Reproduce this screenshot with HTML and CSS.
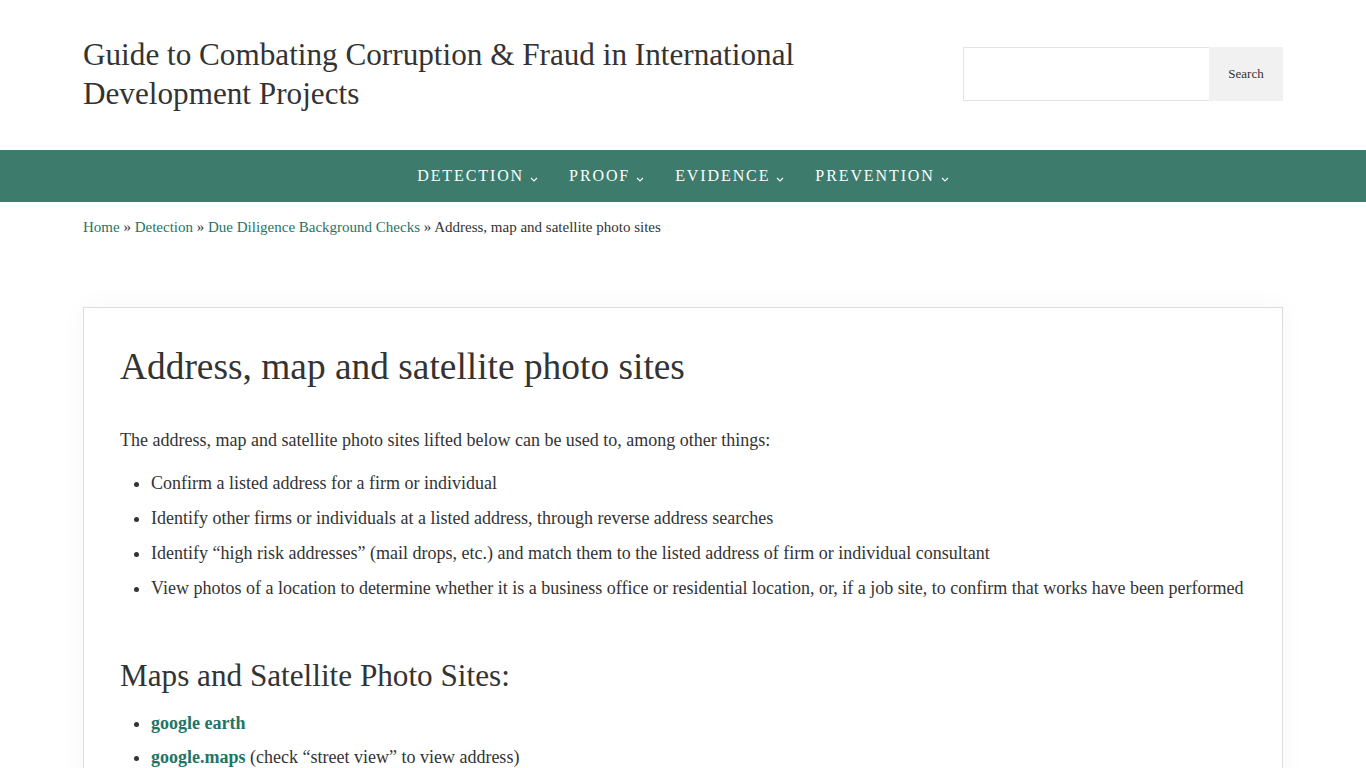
FILE: index.html
```html
<!DOCTYPE html>
<html lang="en">
<head>
<meta charset="utf-8">
<title>Address, map and satellite photo sites</title>
<link rel="stylesheet" href="styles.css">
</head>
<body>
<header class="site-header">
  <div class="wrap header-inner">
    <p class="site-title">Guide to Combating Corruption &amp; Fraud in International Development Projects</p>
    <form class="search">
      <input class="search-input" type="search" aria-label="Search">
      <button class="search-btn" type="button">Search</button>
    </form>
  </div>
</header>
<nav class="main-nav">
  <ul class="menu">
    <li>DETECTION<svg class="caret" viewBox="0 0 8 5" width="8" height="5"><path d="M1 1l3 3 3-3" fill="none" stroke="#fff" stroke-width="1.1"/></svg></li>
    <li>PROOF<svg class="caret" viewBox="0 0 8 5" width="8" height="5"><path d="M1 1l3 3 3-3" fill="none" stroke="#fff" stroke-width="1.1"/></svg></li>
    <li>EVIDENCE<svg class="caret" viewBox="0 0 8 5" width="8" height="5"><path d="M1 1l3 3 3-3" fill="none" stroke="#fff" stroke-width="1.1"/></svg></li>
    <li>PREVENTION<svg class="caret" viewBox="0 0 8 5" width="8" height="5"><path d="M1 1l3 3 3-3" fill="none" stroke="#fff" stroke-width="1.1"/></svg></li>
  </ul>
</nav>
<div class="wrap">
  <p class="crumbs"><a href="#">Home</a> » <a href="#">Detection</a> » <a href="#">Due Diligence Background Checks</a> » Address, map and satellite photo sites</p>
  <article class="card">
    <h1>Address, map and satellite photo sites</h1>
    <p>The address, map and satellite photo sites lifted below can be used to, among other things:</p>
    <ul class="list">
      <li>Confirm a listed address for a firm or individual</li>
      <li>Identify other firms or individuals at a listed address, through reverse address searches</li>
      <li>Identify “high risk addresses” (mail drops, etc.) and match them to the listed address of firm or individual consultant</li>
      <li>View photos of a location to determine whether it is a business office or residential location, or, if a job site, to confirm that works have been performed</li>
    </ul>
    <h2>Maps and Satellite Photo Sites:</h2>
    <ul class="list links">
      <li><a href="#"><strong>google earth</strong></a></li>
      <li><a href="#"><strong>google.maps</strong></a> (check “street view” to view address)</li>
    </ul>
  </article>
</div>
</body>
</html>
```
FILE: styles.css
```css
html, body {
  margin: 0;
  padding: 0;
  background: #fff;
  color: #333;
  font-family: "Liberation Serif", "Times New Roman", serif;
}
.wrap {
  width: 1200px;
  margin: 0 auto;
}
.site-header {
  height: 150px;
}
.header-inner {
  display: flex;
  justify-content: space-between;
  align-items: flex-start;
}
.site-title {
  margin: 35px 0 0;
  font-size: 31.2px;
  line-height: 39px;
  color: #333;
  width: 740px;
}
.search {
  display: flex;
  margin-top: 47px;
  width: 320px;
  height: 54px;
}
.search-input {
  flex: 1;
  border: 1px solid #e3e3e3;
  border-right: 0;
  margin: 0;
  padding: 0 10px;
  height: 54px;
  box-sizing: border-box;
  background: #fff;
}
.search-btn {
  width: 74px;
  height: 54px;
  border: 0;
  margin: 0;
  background: #f1f1f1;
  font-family: "Liberation Serif", serif;
  font-size: 13px;
  color: #333;
}
.main-nav {
  background: #3d7b6d;
  height: 52px;
}
.menu {
  list-style: none;
  margin: 0;
  padding: 0;
  display: flex;
  justify-content: center;
  gap: 31px;
  height: 52px;
  align-items: center;
}
.menu li {
  color: #fff;
  font-size: 16px;
  letter-spacing: 1.9px;
  display: flex;
  align-items: center;
}
.caret {
  display: block;
  margin-left: 6px;
  margin-top: 6px;
}
.crumbs {
  margin: 15px 0 0;
  font-size: 15px;
  line-height: 20px;
  color: #333;
}
a {
  color: #1f7565;
  text-decoration: none;
}
.card {
  margin-top: 70px;
  border: 1px solid #ddd;
  box-shadow: 0 0 24px rgba(0, 0, 0, 0.04);
  padding: 35px 36px 40px;
}
.card h1 {
  margin: 0;
  font-weight: normal;
  font-size: 37.4px;
  line-height: 48px;
}
.card p {
  margin: 35.5px 0 0;
  font-size: 18px;
  line-height: 27px;
}
.list {
  margin: 16px 0 0;
  padding-left: 31px;
  font-size: 18px;
}
.list li {
  line-height: 27px;
  margin-bottom: 8px;
}
.card h2 {
  margin: 54.5px 0 0;
  font-weight: normal;
  font-size: 31.2px;
  line-height: 40px;
}
.card .links {
  margin-top: 14px;
}
.links li {
  margin-bottom: 7px;
}
```
